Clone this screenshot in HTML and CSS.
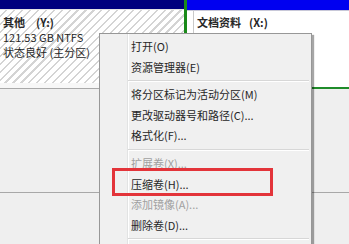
FILE: index.html
```html
<!DOCTYPE html>
<html lang="zh-CN">
<head>
    <meta charset="UTF-8">
    <title>磁盘管理</title>
    <link rel="stylesheet" href="styles.css">
</head>
<body>
    <div class="screen">
        <!-- Disk row: two partitions -->
        <div class="disk-row">
            <div class="part part-primary">
                <div class="part-head"></div>
                <div class="part-body hatch">
                    <div class="part-name"><b>其他</b><b class="drive">(Y:)</b></div>
                    <div>121.53 GB NTFS</div>
                    <div>状态良好 (主分区)</div>
                </div>
                <div class="part-foot"></div>
            </div>
            <div class="part part-logical">
                <div class="part-head"></div>
                <div class="part-body">
                    <div class="logical-box">
                        <div class="part-name"><b>文档资料</b><b class="drive">(X:)</b></div>
                    </div>
                </div>
            </div>
        </div>

        <!-- Lower disk list -->
        <div class="lower">
            <div class="lower-row"></div>
            <div class="lower-row"></div>
        </div>

        <!-- Context menu -->
        <div class="menu">
            <div class="item">打开(O)</div>
            <div class="item">资源管理器(E)</div>
            <div class="sep"></div>
            <div class="item">将分区标记为活动分区(M)</div>
            <div class="item">更改驱动器号和路径(C)...</div>
            <div class="item">格式化(F)...</div>
            <div class="sep"></div>
            <div class="item disabled">扩展卷(X)...</div>
            <div class="item">压缩卷(H)...</div>
            <div class="item disabled">添加镜像(A)...</div>
            <div class="item">删除卷(D)...</div>
            <div class="sep"></div>
            <div class="item"></div>
        </div>

        <!-- Highlight box -->
        <div class="highlight"></div>
    </div>
</body>
</html>
```

FILE: styles.css
```css
* {
    margin: 0;
    padding: 0;
    box-sizing: border-box;
}

body {
    font-family: "Noto Sans CJK SC", "Noto Sans", sans-serif;
    font-size: 11px;
    color: #262626;
    background-color: #efefef;
    overflow: hidden;
}

.screen {
    position: relative;
    width: 349px;
    height: 244px;
    overflow: hidden;
}

/* Disk row */
.disk-row {
    display: flex;
    height: 89px;
}

.part {
    display: flex;
    flex-direction: column;
}

.part-primary {
    width: 184px;
    background-color: #f6f6f6;
}

.part-logical {
    flex: 1;
    border-left: 3px solid #1a8a1a;
    border-bottom: 2px solid #1f8c2a;
    background-color: #ffffff;
}

.part-head {
    flex: none;
    height: 10px;
    background-color: #00007e;
    border-bottom: 1px solid #e4e4e4;
}

.part-logical .part-head {
    height: 11px;
    background-color: #0000f0;
    border-bottom: 1px solid #c8c8d8;
}

.part-body {
    flex: 1;
    padding: 5px 3px 0;
    line-height: 15px;
}

.hatch {
    background-color: #ffffff;
    background-image: repeating-linear-gradient(135deg, #ffffff 0, #ffffff 4px, #d4d4d4 4px, #d4d4d4 5.6px);
}

.part-foot {
    height: 6px;
    background-color: #f7f7f7;
    border-bottom: 1px solid #a9a9a9;
}

.part-name b {
    font-weight: bold;
}

.part-name .drive {
    margin-left: 11px;
}

.part-logical .part-body {
    padding: 0 0 0 6px;
}

.logical-box {
    height: 100%;
    border-left: 1px solid #c9c9c9;
    padding: 4px 3px 0;
}

.part-logical .part-name .drive {
    margin-left: 8px;
}

/* Lower area */
.lower-row {
    height: 104px;
    border-bottom: 1px solid #a8a8a8;
    background-color: #efefef;
}

/* Context menu */
.menu {
    position: absolute;
    left: 99px;
    top: 33px;
    width: 213px;
    height: 240px;
    padding-top: 2px;
    background-color: #f0f0f0;
    border: 1px solid #979797;
    box-shadow: 2px 2px 1px rgba(0, 0, 0, 0.35);
}

.menu::before {
    content: "";
    position: absolute;
    left: 27px;
    top: 0;
    bottom: 0;
    width: 1px;
    background-color: #e2e3e3;
    border-right: 1px solid #ffffff;
}

.item {
    height: 20.6px;
    line-height: 20.6px;
    padding-left: 31px;
    white-space: nowrap;
}

.item.disabled {
    color: #a0a0a0;
}

.sep {
    height: 7px;
    margin-left: 28px;
    margin-right: 2px;
    position: relative;
}

.sep::after {
    content: "";
    position: absolute;
    left: 0;
    right: 0;
    top: 3px;
    height: 1px;
    background-color: #d7d7d7;
    border-bottom: 1px solid #ffffff;
}

/* Red highlight around 压缩卷 */
.highlight {
    position: absolute;
    left: 112px;
    top: 168px;
    width: 161px;
    height: 28px;
    border: 3px solid #e3343a;
}
```
